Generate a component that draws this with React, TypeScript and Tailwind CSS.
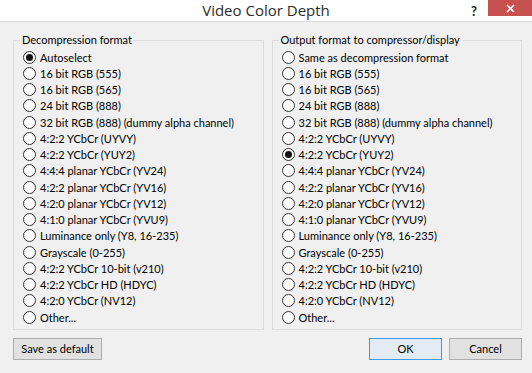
const leftOptions = [
  "Autoselect",
  "16 bit RGB (555)",
  "16 bit RGB (565)",
  "24 bit RGB (888)",
  "32 bit RGB (888) (dummy alpha channel)",
  "4:2:2 YCbCr (UYVY)",
  "4:2:2 YCbCr (YUY2)",
  "4:4:4 planar YCbCr (YV24)",
  "4:2:2 planar YCbCr (YV16)",
  "4:2:0 planar YCbCr (YV12)",
  "4:1:0 planar YCbCr (YVU9)",
  "Luminance only (Y8, 16-235)",
  "Grayscale (0-255)",
  "4:2:2 YCbCr 10-bit (v210)",
  "4:2:2 YCbCr HD (HDYC)",
  "4:2:0 YCbCr (NV12)",
  "Other...",
]

const rightOptions = ["Same as decompression format", ...leftOptions.slice(1)]

const Radio = ({ label, checked }: { label: string; checked?: boolean }) => (
  <div className="flex items-center h-[16.25px] gap-[4px]">
    <div className="w-[13px] h-[13px] rounded-full border border-[#333333] bg-white flex items-center justify-center shrink-0">
      {checked && <div className="w-[7px] h-[7px] rounded-full bg-[#111111]" />}
    </div>
    <span className="whitespace-nowrap leading-none">{label}</span>
  </div>
)

const Group = ({ title, options, selected }: { title: string; options: string[]; selected: number }) => (
  <div className="relative border border-[#dcdcdc] pt-[8px] pb-[4px] pl-[9px]">
    <span className="absolute -top-[9px] left-[6px] bg-[#f0f0f0] px-[2px] leading-[16px]">{title}</span>
    {options.map((o, i) => (
      <Radio key={o} label={o} checked={i === selected} />
    ))}
  </div>
)

const Button = ({ children, w, primary }: { children: string; w: string; primary?: boolean }) => (
  <button
    className={
      "h-[22px] flex items-center justify-center border " +
      w +
      (primary ? " border-[#3c9ae8] bg-[#e3ecf5]" : " border-[#adadad] bg-[#e1e1e1]")
    }
  >
    {children}
  </button>
)

export default function App() {
  return (
    <div className="w-[532px] h-[373px] bg-[#f0f0f0] text-[11px] text-black overflow-hidden font-['Lato',sans-serif]">
      <div className="relative h-[22px] bg-white border-b border-[#dadada] flex items-center justify-center">
        <span className="text-[15px] text-[#2b2b2b] leading-none font-['Open_Sans',sans-serif]">Video Color Depth</span>
        <span className="absolute left-[471px] top-[2px] text-[13px] font-bold text-[#222]">?</span>
        <div className="absolute right-0 top-0 w-[44px] h-[16px] bg-[#c75050] flex items-center justify-center">
          <svg width="9" height="9" viewBox="0 0 9 9">
            <path d="M1 1L8 8M8 1L1 8" stroke="white" strokeWidth="1.6" />
          </svg>
        </div>
      </div>
      <div className="pl-[13px] pr-[10px] pt-[18px]">
        <div className="grid grid-cols-2 gap-[8px]">
          <Group title="Decompression format" options={leftOptions} selected={0} />
          <Group title="Output format to compressor/display" options={rightOptions} selected={6} />
        </div>
        <div className="flex items-center mt-[8px]">
          <Button w="w-[89px]">Save as default</Button>
          <div className="flex-1" />
          <div className="flex gap-[7px]">
            <Button w="w-[73px]" primary>
              OK
            </Button>
            <Button w="w-[73px]">Cancel</Button>
          </div>
        </div>
      </div>
    </div>
  )
}
